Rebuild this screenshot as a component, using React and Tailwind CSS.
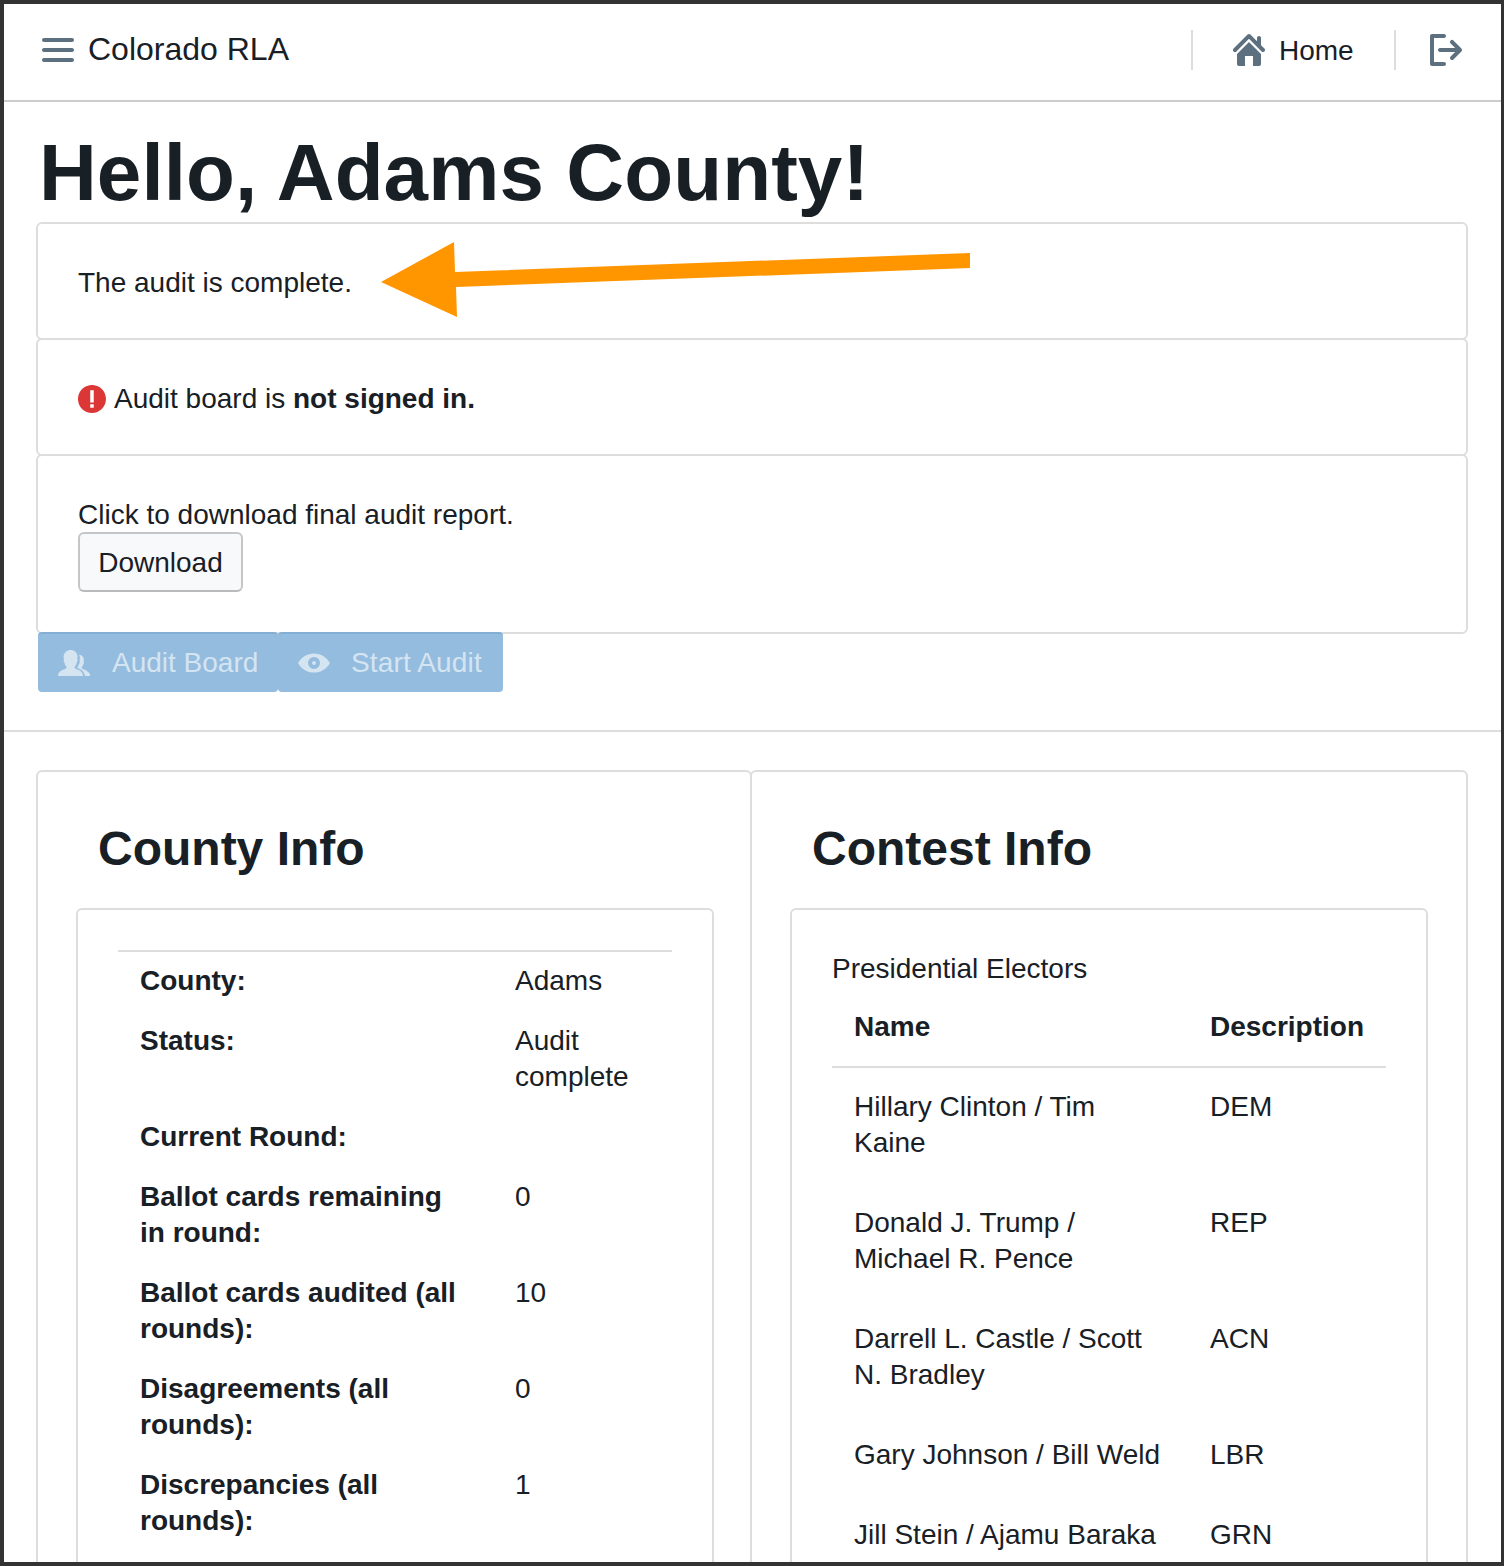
const P = {
  menu: "M1 4h14c.55 0 1-.45 1-1s-.45-1-1-1H1c-.55 0-1 .45-1 1s.45 1 1 1zm14 3H1c-.55 0-1 .45-1 1s.45 1 1 1h14c.55 0 1-.45 1-1s-.45-1-1-1zm0 5H1c-.55 0-1 .45-1 1s.45 1 1 1h14c.55 0 1-.45 1-1s-.45-1-1-1z",
  home: "M2 10v5c0 .55.45 1 1 1h3v-5h4v5h3c.55 0 1-.45 1-1v-5L8 4l-6 6zm13.71-2.71L14 5.59V2c0-.55-.45-1-1-1s-1 .45-1 1v1.59L8.71.29C8.53.11 8.28 0 8 0s-.53.11-.71.29l-7 7a1.003 1.003 0 001.42 1.42L8 2.41l6.29 6.29c.18.19.43.3.71.3a1.003 1.003 0 00.71-1.71z",
  logout: "M7 14H2V2h5c.55 0 1-.45 1-1s-.45-1-1-1H1C.45 0 0 .45 0 1v14c0 .55.45 1 1 1h6c.55 0 1-.45 1-1s-.45-1-1-1zm8.71-6.71l-4-4a1.003 1.003 0 00-1.42 1.42L12.59 7H5c-.55 0-1 .45-1 1s.45 1 1 1h7.59l-2.29 2.29c-.19.18-.3.43-.3.71a1.003 1.003 0 001.71.71l4-4c.18-.18.29-.43.29-.71 0-.28-.11-.53-.29-.71z",
  eye: "M8 3.200C4.600 3.200 1.700 5 0 8c1.700 3 4.600 4.800 8 4.800s6.300-1.800 8-4.800c-1.700-3-4.600-4.800-8-4.800zM8 11A3 3 0 1 1 8 5a3 3 0 0 1 0 6zM8 7a1 1 0 1 0 0 2 1 1 0 0 0 0-2z",
  people: "M10.900 11.700c-1.100-.5-1.900-.7-2.300-1-.3-.2-.3-.5-.2-.8.4-.5.9-1.200 1-2.100.3-.3.4-.6.4-1 0-.3-.1-.5-.2-.7.1-.4.3-1.300.1-2C9.400 2.800 8.200 1.500 6.300 1.500S3.200 2.800 2.900 4.100c-.2.700 0 1.600.1 2-.1.200-.2.400-.2.700 0 .4.100.7.400 1 .1.900.600 1.600 1 2.100.100.300.100.600-.200.800-.400.300-1.200.500-2.300 1C1 12.200.200 12.600 0 14c0 .300.200.500.500.500h11.500c.300 0 .500-.200.500-.500-.200-1.400-1-1.800-1.600-2.300zm5.100 2.800h-2.500c-.200-1.200-.800-2.200-1.800-3-.500-.400-1.200-.700-1.700-.900l-.400-.200c.300-.400.600-1 .800-1.600.300-.400.500-.900.500-1.400 0-.300-.100-.600-.100-.800.100-.600.200-1.400 0-2.100-.100-.300-.200-.600-.400-.800 1.300.100 2.200 1 2.500 2 .100.500 0 1.200-.100 1.500.100.100.200.300.200.600 0 .300-.100.500-.300.700-.100.700-.500 1.200-.800 1.600-.100.200-.100.400.100.600.300.200.900.400 1.700.800.500.300 1.500.900 2.300 2z",
  error: "M7.990-.01c-4.420 0-8 3.580-8 8s3.580 8 8 8 8-3.580 8-8-3.580-8-8-8zm1 13h-2v-2h2v2zm0-3h-2v-7h2v7z",
};

const Icon = ({ d, className }) => (
  <svg viewBox="0 0 16 16" className={className} fill="currentColor" fillRule="evenodd" aria-hidden="true">
    <path d={d} />
  </svg>
);

const Card = ({ className = "", children }) => (
  <div className={`rounded-[6px] border-2 border-[#dddddd] bg-white ${className}`}>{children}</div>
);

const county = [
  ["County:", "Adams"],
  ["Status:", "Audit complete"],
  ["Current Round:", ""],
  ["Ballot cards remaining in round:", "0"],
  ["Ballot cards audited (all rounds):", "10"],
  ["Disagreements (all rounds):", "0"],
  ["Discrepancies (all rounds):", "1"],
];

const contest = [
  ["Hillary Clinton / Tim Kaine", "DEM"],
  ["Donald J. Trump / Michael R. Pence", "REP"],
  ["Darrell L. Castle / Scott N. Bradley", "ACN"],
  ["Gary Johnson / Bill Weld", "LBR"],
  ["Jill Stein / Ajamu Baraka", "GRN"],
];

export default function App() {
  return (
    <div className="h-[1566px] w-[1504px] overflow-hidden border-t-4 border-b-4 border-l-4 border-r-[3px] border-[#333333] bg-white font-['Liberation_Sans',Arial,sans-serif] text-[28px] leading-[36px] text-[#182026]">
      <nav className="flex h-[98px] items-center justify-between border-b-2 border-[#cccccc] pb-[4px] pl-[38px] pr-[39px]">
        <div className="flex items-center gap-[14px]">
          <Icon d={P.menu} className="h-8 w-8 text-[#5c7080]" />
          <span className="pb-[2px] text-[32px]">Colorado RLA</span>
        </div>
        <div className="flex items-center">
          <div className="h-10 w-[2px] bg-[#dddddd]" />
          <div className="flex w-[201px] items-center gap-[14px] pl-[40px]">
            <Icon d={P.home} className="h-8 w-8 text-[#5c7080]" />
            <span className="pt-[2px]">Home</span>
          </div>
          <div className="h-10 w-[2px] bg-[#dddddd]" />
          <Icon d={P.logout} className="ml-[34px] h-8 w-8 text-[#5c7080]" />
        </div>
      </nav>

      <main className="px-[32px]">
        <h1 className="ml-[3px] h-[120px] pt-[23px] text-[80px] font-bold leading-[96px] tracking-[0.1px]">Hello, Adams County!</h1>

        <Card className="relative h-[118px] w-[1432px] px-[40px] pt-[41px]">
          The audit is complete.
          <svg className="absolute left-[341px] top-[17px] h-[80px] w-[592px]" viewBox="0 0 592 80" aria-hidden="true">
            <polygon points="2,41 75,1 76,31 591,12 591,27 77,46 78,76" fill="#ff9600" />
          </svg>
        </Card>
        <Card className="mt-[-2px] h-[118px] w-[1432px] px-[40px] pt-[41px]">
          <div className="flex items-center gap-[8px]">
            <Icon d={P.error} className="h-7 w-7 text-[#db3737]" />
            <span>
              Audit board is <strong>not signed in.</strong>
            </span>
          </div>
        </Card>
        <Card className="mt-[-2px] h-[180px] w-[1432px] px-[40px] pt-[41px]">
          <p className="mb-[-1px]">Click to download final audit report.</p>
          <button className="flex h-[60px] w-[165px] items-center justify-center rounded-[6px] border-2 border-[#c4c6c8] border-b-[#b8babc] bg-[#f8f9fb] pt-[2px]">
            Download
          </button>
        </Card>

        <div className="ml-[2px] mt-[-2px] flex">
          <div className="relative flex h-[60px] w-[240px] items-center gap-[22px] rounded-[4px] border-t-2 border-[#84afd4] bg-[#93bcdf] pl-5 text-[#d5e4f1]">
            <Icon d={P.people} className="h-8 w-8" />
            <span>Audit Board</span>
          </div>
          <div className="relative flex h-[60px] w-[225px] items-center gap-[21px] rounded-[4px] border-t-2 border-[#84afd4] bg-[#93bcdf] pl-5 text-[#d5e4f1]">
            <Icon d={P.eye} className="h-8 w-8" />
            <span className="tracking-[0.15px]">Start Audit</span>
          </div>
        </div>
      </main>

      <div className="mt-[38px] h-[2px] bg-[#dddddd]" />

      <section className="mt-[38px] flex px-[32px]">
        <Card className="h-[900px] w-[716px] px-[38px] pt-[48px]">
          <h2 className="ml-[22px] h-[88px] text-[48px] font-bold leading-[58px]">County Info</h2>
          <Card className="h-[800px] w-[638px] px-[40px] pt-[40px]">
            <table className="w-[554px] table-fixed border-collapse border-t-2 border-[#dddddd]">
              <colgroup>
                <col className="w-[375px]" />
                <col />
              </colgroup>
              <tbody>
                {county.map(([k, v]) => (
                  <tr key={k}>
                    <td className="px-[22px] pb-[13px] pt-[11px] align-top font-bold">{k}</td>
                    <td className="px-[22px] pb-[13px] pt-[11px] align-top">{v}</td>
                  </tr>
                ))}
              </tbody>
            </table>
          </Card>
        </Card>

        <Card className="ml-[-2px] h-[900px] w-[718px] px-[38px] pt-[48px]">
          <h2 className="ml-[22px] h-[88px] text-[48px] font-bold leading-[58px]">Contest Info</h2>
          <Card className="h-[800px] w-[638px] px-[40px] pt-[40px]">
            <div className="mt-px">Presidential Electors</div>
            <table className="w-[554px] table-fixed border-collapse">
              <colgroup>
                <col className="w-[356px]" />
                <col />
              </colgroup>
              <thead>
                <tr className="border-b-2 border-[#dddddd]">
                  <th className="px-[22px] pb-[21px] pt-[22px] text-left font-bold">Name</th>
                  <th className="px-[22px] pb-[21px] pt-[22px] text-left font-bold">Description</th>
                </tr>
              </thead>
              <tbody>
                {contest.map(([n, d]) => (
                  <tr key={d}>
                    <td className="px-[22px] pb-[23px] pt-[21px] align-top">{n}</td>
                    <td className="px-[22px] pb-[23px] pt-[21px] align-top">{d}</td>
                  </tr>
                ))}
              </tbody>
            </table>
          </Card>
        </Card>
      </section>
    </div>
  );
}
